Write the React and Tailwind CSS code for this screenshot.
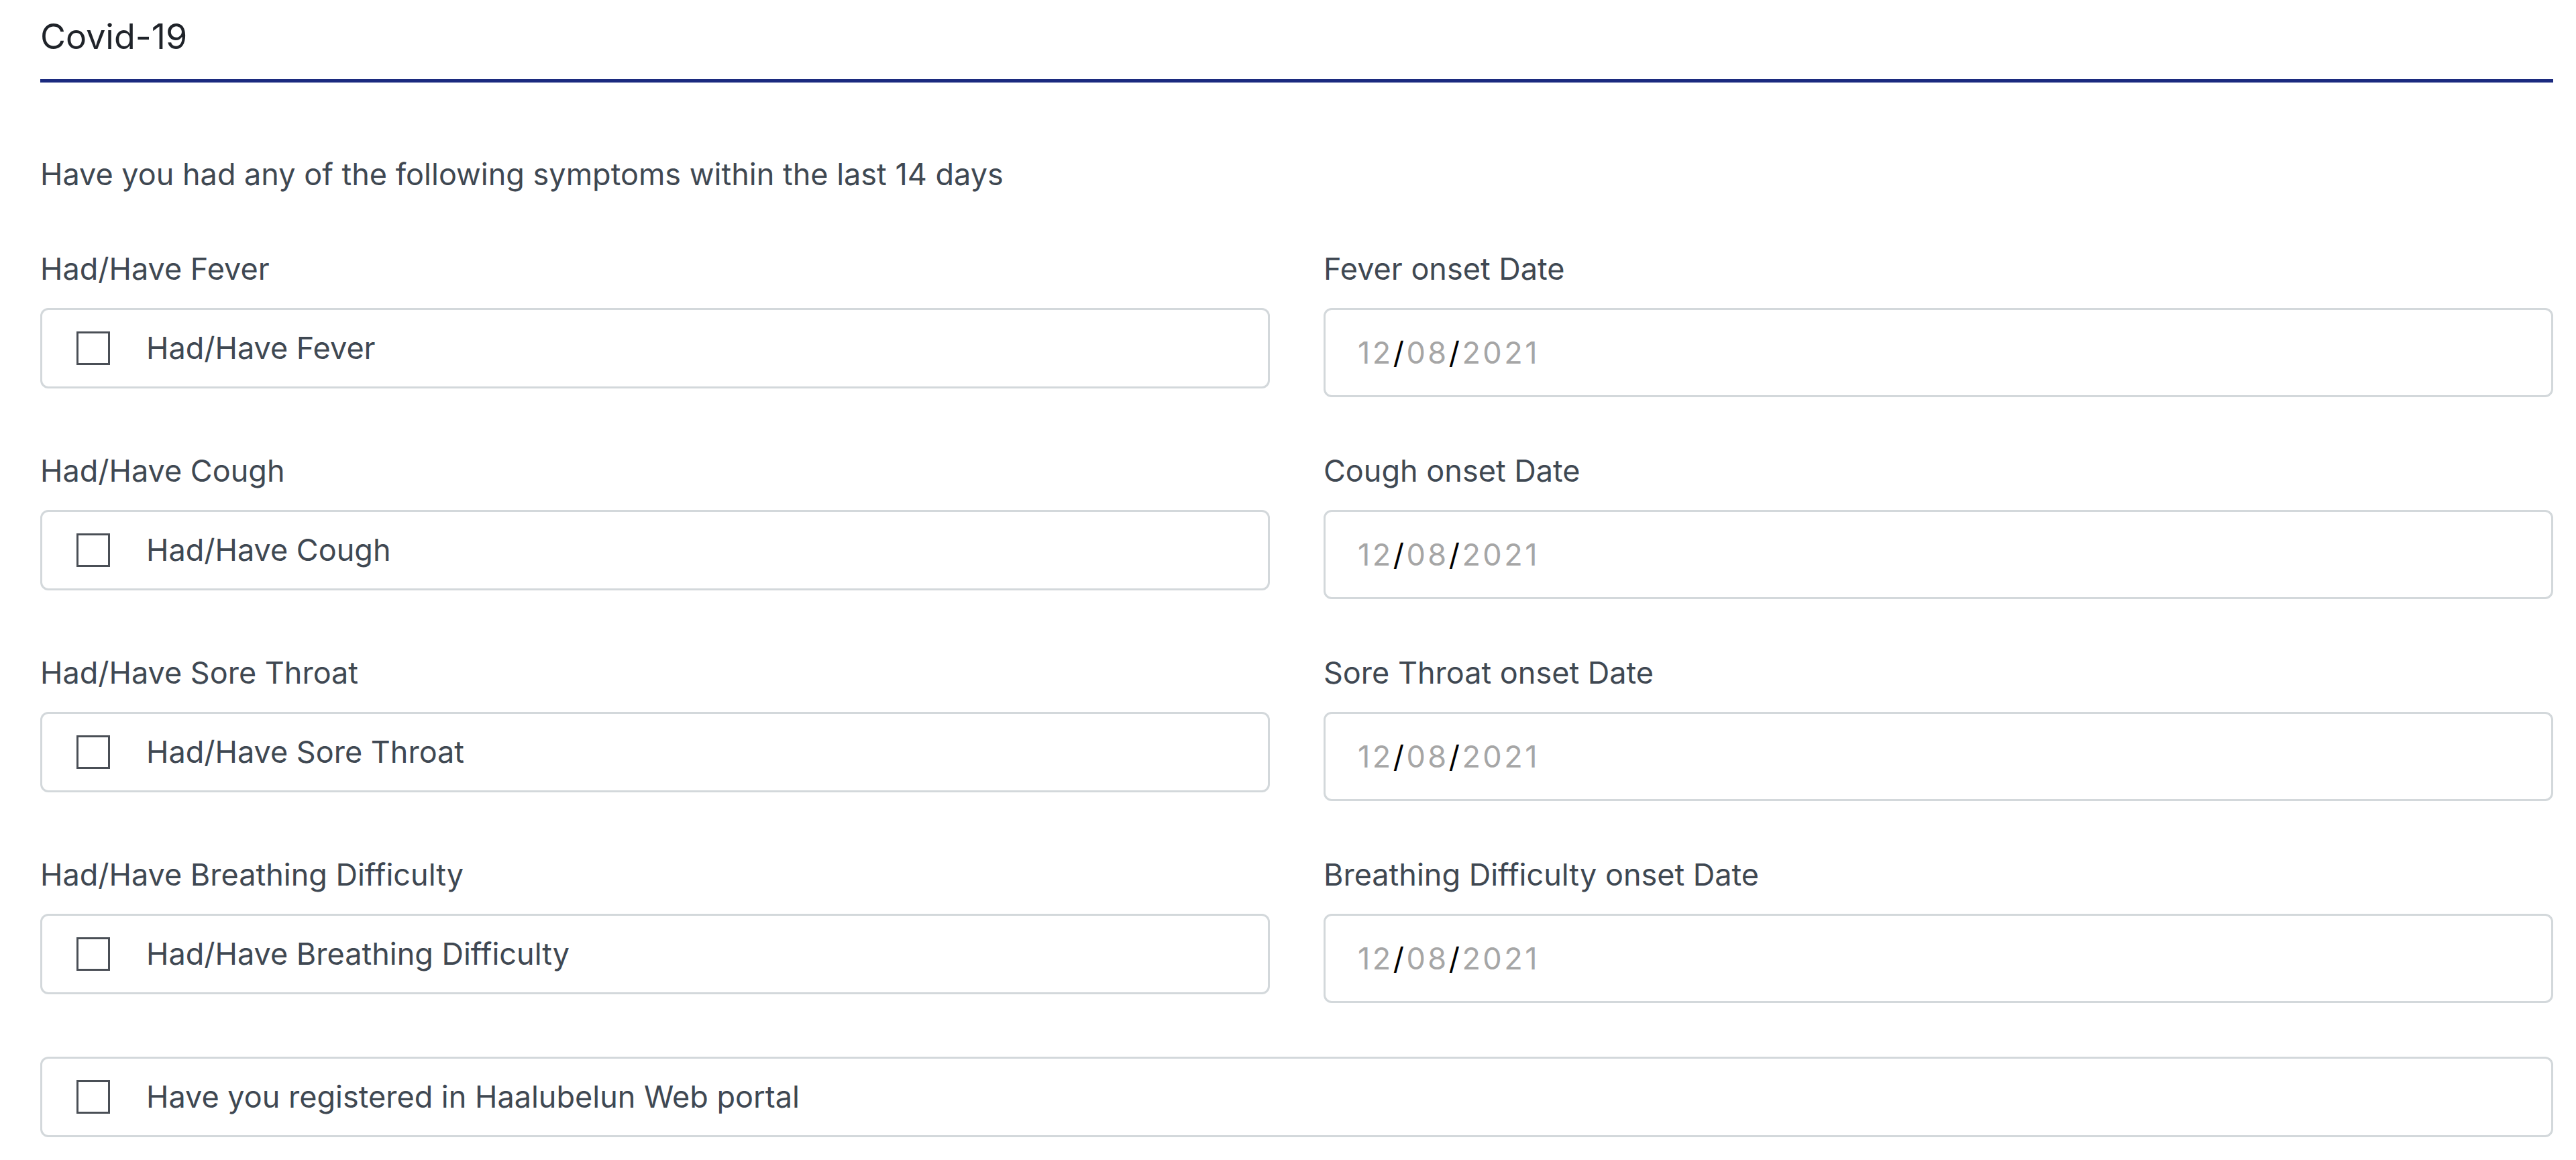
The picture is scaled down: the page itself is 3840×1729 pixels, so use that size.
import React, { useState } from 'react';

const symptoms = [
  { key: 'fever', name: 'Fever' },
  { key: 'cough', name: 'Cough' },
  { key: 'soreThroat', name: 'Sore Throat' },
  { key: 'breathing', name: 'Breathing Difficulty' },
];

const CheckField = ({ label, checked, onToggle }) => (
  <label className="flex h-[120px] cursor-pointer items-center rounded-[12px] border-[3px] border-[#d3d8db] bg-white pl-[51px]">
    <input type="checkbox" checked={checked} onChange={onToggle} className="peer sr-only" />
    <span className="flex h-[50px] w-[50px] shrink-0 items-center justify-center border-[3px] border-[#4a4f56] bg-white">
      {checked && (
        <svg viewBox="0 0 24 24" className="h-[38px] w-[38px]" fill="none" stroke="#4a4f56" strokeWidth="3">
          <path d="M5 12l5 5L20 7" />
        </svg>
      )}
    </span>
    <span className="ml-[54px] text-[45px] leading-[66px] text-[#3f4852]">{label}</span>
  </label>
);

const DateField = ({ day, month, year }) => (
  <div className="flex h-[133px] items-center rounded-[12px] border-[3px] border-[#d3d8db] bg-white pl-[48px]">
    <span className="text-[45px] leading-[66px] tracking-[3.5px] text-[#a6a6a6]">
      {day}
      <span className="text-black">/</span>
      {month}
      <span className="text-black">/</span>
      {year}
    </span>
  </div>
);

const App = () => {
  const [checked, setChecked] = useState({});

  const toggle = (key) => setChecked({ ...checked, [key]: !checked[key] });

  return (
    <div className="min-h-screen w-full bg-white pl-[60px] pr-[34px]" style={{ fontFamily: 'Inter, "Noto Sans", sans-serif' }}>
      {/* Header */}
      <h2 className="border-b-[5px] border-[#1b2a7f] pb-[27px] pt-[18px] text-[52px] font-normal leading-[73px] text-[#1f2329]">
        Covid-19
      </h2>

      <p className="mt-[104px] text-[45px] leading-[66px] text-[#3f4852]">
        Have you had any of the following symptoms within the last 14 days
      </p>

      {/* Symptoms */}
      <div className="mt-[75px] grid grid-cols-2 items-start gap-x-[80px] gap-y-[77px]">
        {symptoms.map((s) => (
          <React.Fragment key={s.key}>
            <div>
              <p className="text-[45px] leading-[66px] text-[#3f4852]">Had/Have {s.name}</p>
              <div className="mt-[25px]">
                <CheckField label={`Had/Have ${s.name}`} checked={!!checked[s.key]} onToggle={() => toggle(s.key)} />
              </div>
            </div>
            <div>
              <p className="text-[45px] leading-[66px] text-[#3f4852]">{s.name} onset Date</p>
              <div className="mt-[25px]">
                <DateField day="12" month="08" year="2021" />
              </div>
            </div>
          </React.Fragment>
        ))}
      </div>

      <div className="mt-[80px]">
        <CheckField
          label="Have you registered in Haalubelun Web portal"
          checked={!!checked.portal}
          onToggle={() => toggle('portal')}
        />
      </div>
    </div>
  );
};

export default App;
